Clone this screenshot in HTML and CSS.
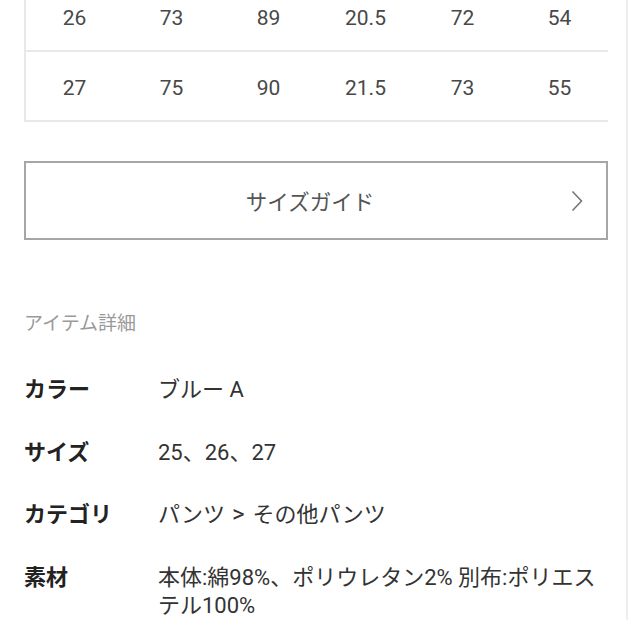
FILE: index.html
```html
<!DOCTYPE html>
<html lang="ja">
<head>
<meta charset="utf-8">
<title>アイテム詳細</title>
<link rel="stylesheet" href="styles.css">
</head>
<body>
<div class="page">
  <div class="size-table">
    <div class="row">
      <div class="cell">26</div><div class="cell">73</div><div class="cell">89</div><div class="cell">20.5</div><div class="cell">72</div><div class="cell">54</div>
    </div>
    <div class="row">
      <div class="cell">27</div><div class="cell">75</div><div class="cell">90</div><div class="cell">21.5</div><div class="cell">73</div><div class="cell">55</div>
    </div>
  </div>

  <div class="guide-btn">
    <span class="guide-text">サイズガイド</span>
    <svg class="chevron" width="12" height="22" viewBox="0 0 12 22"><polyline points="1.5,1.5 10.5,11 1.5,20.5" fill="none" stroke="#777" stroke-width="1.6"/></svg>
  </div>

  <section class="details">
    <h2 class="details-title">アイテム詳細</h2>
    <dl class="spec">
      <dt>カラー</dt><dd>ブルー A</dd>
      <dt>サイズ</dt><dd>25、26、27</dd>
      <dt>カテゴリ</dt><dd>パンツ<span class="sep"> &gt; </span>その他パンツ</dd>
      <dt>素材</dt><dd>本体:綿98%、ポリウレタン2% 別布:ポリエステル100%</dd>
    </dl>
  </section>
</div>
</body>
</html>
```

FILE: styles.css
```css
html, body {
  margin: 0;
  background: #fff;
}
body {
  font-family: Roboto, "Noto Sans CJK JP", sans-serif;
  overflow: hidden;
}
.page {
  width: 584px;
  padding: 0 18px 0 24px;
  border-right: 2px solid #eeeeee;
  min-height: 629px;
}
.size-table {
  margin-top: -18px;
  border-left: 2px solid #e8e8e8;
}
.row {
  display: grid;
  grid-template-columns: repeat(6, 97px);
  height: 68px;
  border-bottom: 2px solid #e8e8e8;
}
.cell {
  display: flex;
  align-items: center;
  justify-content: center;
  padding-top: 4px;
  font-size: 21px;
  color: #484848;
}
.guide-btn {
  margin-top: 39px;
  height: 75px;
  border: 2px solid #a6a6a6;
  display: grid;
  grid-template-columns: 1fr auto 1fr;
  align-items: center;
}
.guide-text {
  grid-column: 2;
  font-size: 21.5px;
  color: #555;
  padding-right: 12px;
}
.chevron {
  grid-column: 3;
  justify-self: end;
  margin-right: 23px;
}
.details {
  margin-top: 70px;
}
.details-title {
  margin: 0;
  font-size: 19px;
  line-height: 28px;
  font-weight: normal;
  color: #9a9a9a;
}
.spec {
  margin: 38px 0 0;
  display: grid;
  grid-template-columns: 134px 1fr;
  row-gap: 34.5px;
  font-size: 22px;
  line-height: 28px;
}
.spec dt {
  font-weight: bold;
  color: #222;
}
.spec dd {
  margin: 0;
  color: #333;
}
.sep {
  font-size: 24px;
  line-height: 0;
  letter-spacing: 1px;
}
```
